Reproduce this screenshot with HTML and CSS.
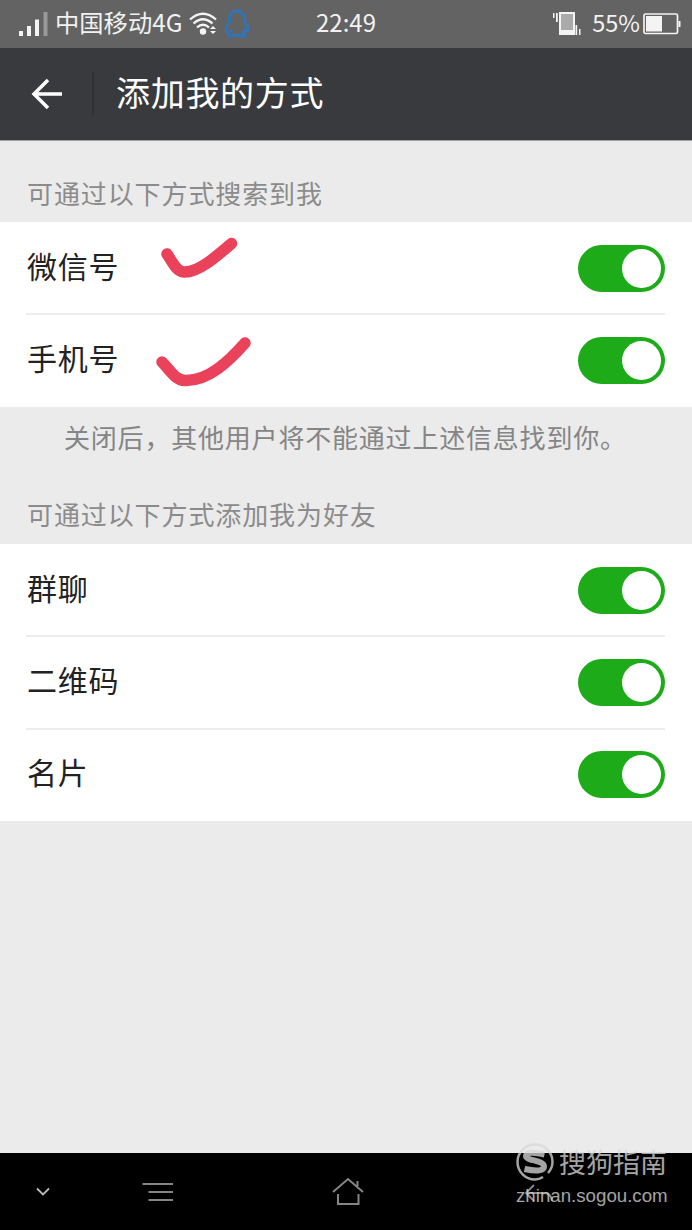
FILE: index.html
```html
<!DOCTYPE html>
<html lang="zh-CN">
<head>
<meta charset="utf-8">
<title>添加我的方式</title>
<link rel="stylesheet" href="styles.css">
</head>
<body>
<div class="screen">
  <div class="status">
    <div class="status-left">
      <svg class="signal" width="30" height="24" viewBox="0 0 30 24"><path fill="#f4f4f4" d="M1 19h4v5h-4zM9 14h4v10h-4zM17 7.500h4v16.500h-4z"/><path fill="#999" d="M25.500 0h4v24h-4z"/></svg>
      <span class="carrier">中国移动4G</span>
      <svg class="wifi" width="28" height="24" viewBox="0 0 28 24" fill="none" stroke="#f4f4f4" stroke-width="2.300"><path d="M1 7.500Q14-4 27 7.500M4.500 11.500Q14 3 23.500 11.500M8 15.500Q14 10 20 15.500"/><circle cx="14" cy="19.500" r="3.200" fill="#f4f4f4" stroke="none"/><path fill="#f4f4f4" stroke="none" d="M21 17l3-3 3 3zM21 19l3 3 3-3z"/></svg>
      <svg class="qq" width="28" height="32" viewBox="0 0 28 32" fill="none" stroke="#3273b5" stroke-width="3"><path d="M7 24Q3 25 3 21Q3 18 6 15Q6 3 14 3Q22 3 22 15Q26 19 25 23Q24 24 22 22L20 25Q24 28 20 28.500L14 27L8 28.500Q4 28.500 7 24Z"/></svg>
    </div>
    <div class="clock">22:49</div>
    <div class="status-right">
      <svg class="vibrate" width="28" height="24" viewBox="0 0 28 24"><path fill="#f4f4f4" d="M0 1h1.500v5h-1.500zM3 1h1.800v9h-1.800zM6 0h16v23h-16zM22.500 13h1.700v10h-1.700zM26 17h1.500v6h-1.500z"/><path fill="#aaa" d="M8 2h12v16h-12z"/></svg>
      <span class="percent">55%</span>
      <svg class="battery" width="38" height="22" viewBox="0 0 38 22"><rect x="1" y="1" width="33.500" height="19.500" rx="1.500" fill="none" stroke="#f4f4f4" stroke-width="1.700"/><path fill="#f4f4f4" d="M3 3h16v15.500h-16zM35.500 8h2v6h-2z"/></svg>
    </div>
  </div>

  <div class="header">
    <svg class="back" width="34" height="32" viewBox="0 0 34 32" fill="none" stroke="#fff" stroke-width="3.500"><path d="M18 2L4 16L18 30M4 16H32"/></svg>
    <div class="separator"></div>
    <div class="title">添加我的方式</div>
  </div>

  <div class="section">可通过以下方式搜索到我</div>
  <div class="group">
    <div class="row"><span class="label">微信号</span>
      <svg class="tick" width="80" height="44" viewBox="0 0 80 44"><path fill="none" stroke="#e9425a" stroke-width="11.500" stroke-linecap="round" stroke-linejoin="round" d="M7 17C12 24 16 34.500 24 35C38 36 57 19 71.500 6.500"/></svg>
      <span class="toggle"></span></div>
    <div class="row"><span class="label">手机号</span>
      <svg class="tick tick-wide" width="98" height="52" viewBox="0 0 98 52"><path fill="none" stroke="#e9425a" stroke-width="11.500" stroke-linecap="round" stroke-linejoin="round" d="M7 26C15 34 20 44 30 44.500C54 45 75 24 90 7"/></svg>
      <span class="toggle"></span></div>
  </div>
  <div class="note">关闭后，其他用户将不能通过上述信息找到你。</div>
  <div class="section section-friends">可通过以下方式添加我为好友</div>
  <div class="group">
    <div class="row"><span class="label">群聊</span><span class="toggle"></span></div>
    <div class="row"><span class="label">二维码</span><span class="toggle"></span></div>
    <div class="row"><span class="label">名片</span><span class="toggle"></span></div>
  </div>

  <div class="nav">
    <svg class="nav-down" width="14" height="10" viewBox="0 0 14 10" fill="none" stroke="#bbb" stroke-width="1.800"><path d="M1 1.500L7 7.500L13 1.500"/></svg>
    <svg class="nav-menu" width="32" height="20" viewBox="0 0 32 20" fill="none" stroke="#858585" stroke-width="2"><path d="M0.500 2H31M6.500 10H31M6.500 18H31"/></svg>
    <svg class="nav-home" width="32" height="29" viewBox="0 0 32 29" fill="none" stroke="#858585" stroke-width="2"><path d="M1 15L16 2L31 15M25.500 9V4M6 17V27H26.500V17"/></svg>
    <svg class="nav-back" width="30" height="20" viewBox="0 0 30 20" fill="none" stroke="#858585" stroke-width="2"><path d="M10 1L2 9L10 17M2 9H20Q27 9 28 17"/></svg>
  </div>

  <div class="watermark">
    <div class="brand">
      <svg width="38" height="38" viewBox="0 0 38 38" fill="none" stroke="#d8d8d8"><path stroke-width="2.500" d="M27 34Q23 36.500 19 36.500A17.500 17.500 0 1 1 36.500 19Q36.500 25 32 30"/><path stroke-width="6" d="M28.500 11.500Q10 7.500 10 13C10 18 28 17 28 23.500Q28 30 8.500 26"/></svg>
      <span>搜狗指南</span>
    </div>
    <div class="url">zhinan.sogou.com</div>
  </div>
</div>
</body>
</html>
```
FILE: styles.css
```css
* { box-sizing: border-box; }
body { margin: 0; }
.screen {
  position: relative;
  display: flex;
  flex-direction: column;
  width: 692px;
  height: 1230px;
  overflow: hidden;
  background: #ebebeb;
  font-family: "AR PL UKai CN", KaiTi, "Noto Sans CJK SC", sans-serif;
  white-space: nowrap;
}
svg { display: block; flex: none; }
.status {
  display: grid;
  grid-template-columns: 316px 1fr auto;
  align-items: center;
  height: 48px;
  padding-right: 11px;
  background: #636363;
  color: #f2f2f2;
  font-size: 24px;
  line-height: 44px;
}
.status-left, .status-right { display: flex; align-items: center; height: 48px; }
.status-left { padding-left: 18px; }
.carrier { width: 129px; margin-left: 7px; padding-bottom: 5px; font-size: 24.300px; }
.wifi { margin-left: 5px; }
.qq { margin-left: 6px; }
.clock { padding-bottom: 4px; }
.percent { margin-left: 11px; padding-bottom: 4px; font-size: 23.500px; }
.battery { margin-left: 3px; }
.header {
  display: flex;
  align-items: center;
  height: 93px;
  padding-left: 30px;
  border-bottom: 1px solid #a0a0a2;
  background: #393a3e;
  color: #fff;
}
.separator { width: 2px; height: 44px; margin: 0 22px 0 28px; background: #303135; }
.title { padding-bottom: 5px; font-size: 34px; letter-spacing: .7px; line-height: 48px; }
.section {
  height: 81px;
  padding: 32px 0 0 27px;
  color: #8b8b8b;
  font-size: 26px;
  letter-spacing: .9px;
  line-height: 40px;
}
.section-friends { height: 74px; padding-top: 24px; }
.group { padding: 0 27px 0 26px; background: #fff; }
.row {
  display: flex;
  align-items: center;
  height: 92.300px;
}
.row + .row { box-shadow: 0 -1px #ededed, inset 0 1px #ededed; }
.label {
  width: 134px;
  padding-left: 1px;
  padding-bottom: 7px;
  color: #222;
  font-size: 30px;
  letter-spacing: .7px;
  line-height: 42px;
}
.tick { margin-bottom: 18px; }
.tick-wide { margin: 3px 0 0 -5px; }
.toggle {
  width: 87px;
  height: 47px;
  margin-left: auto;
  padding: 4px;
  border-radius: 24px;
  background: #1dab1a;
}
.toggle::before {
  content: "";
  display: block;
  width: 39px;
  height: 39px;
  margin-left: auto;
  border-radius: 50%;
  background: #fff;
}
.note {
  height: 63.400px;
  padding: 10px 0 0 64px;
  color: #858585;
  font-size: 26px;
  letter-spacing: .8px;
  line-height: 40px;
}
.nav {
  display: flex;
  align-items: center;
  height: 77px;
  margin-top: auto;
  padding-left: 36px;
  background: #000;
}
.nav-menu { margin-left: 92px; }
.nav-home { margin-left: 158px; }
.nav-back { margin: 4px 0 0 160px; }
.watermark {
  position: absolute;
  left: 516px;
  top: 1142px;
  color: #d8d8d8;
  opacity: .76;
}
.brand {
  display: flex;
  align-items: center;
  gap: 5px;
  height: 40px;
  font-family: "Noto Sans CJK SC", sans-serif;
  font-size: 27px;
  line-height: 40px;
}
.url { font: 18.700px/27px "Liberation Sans", sans-serif; }
```
